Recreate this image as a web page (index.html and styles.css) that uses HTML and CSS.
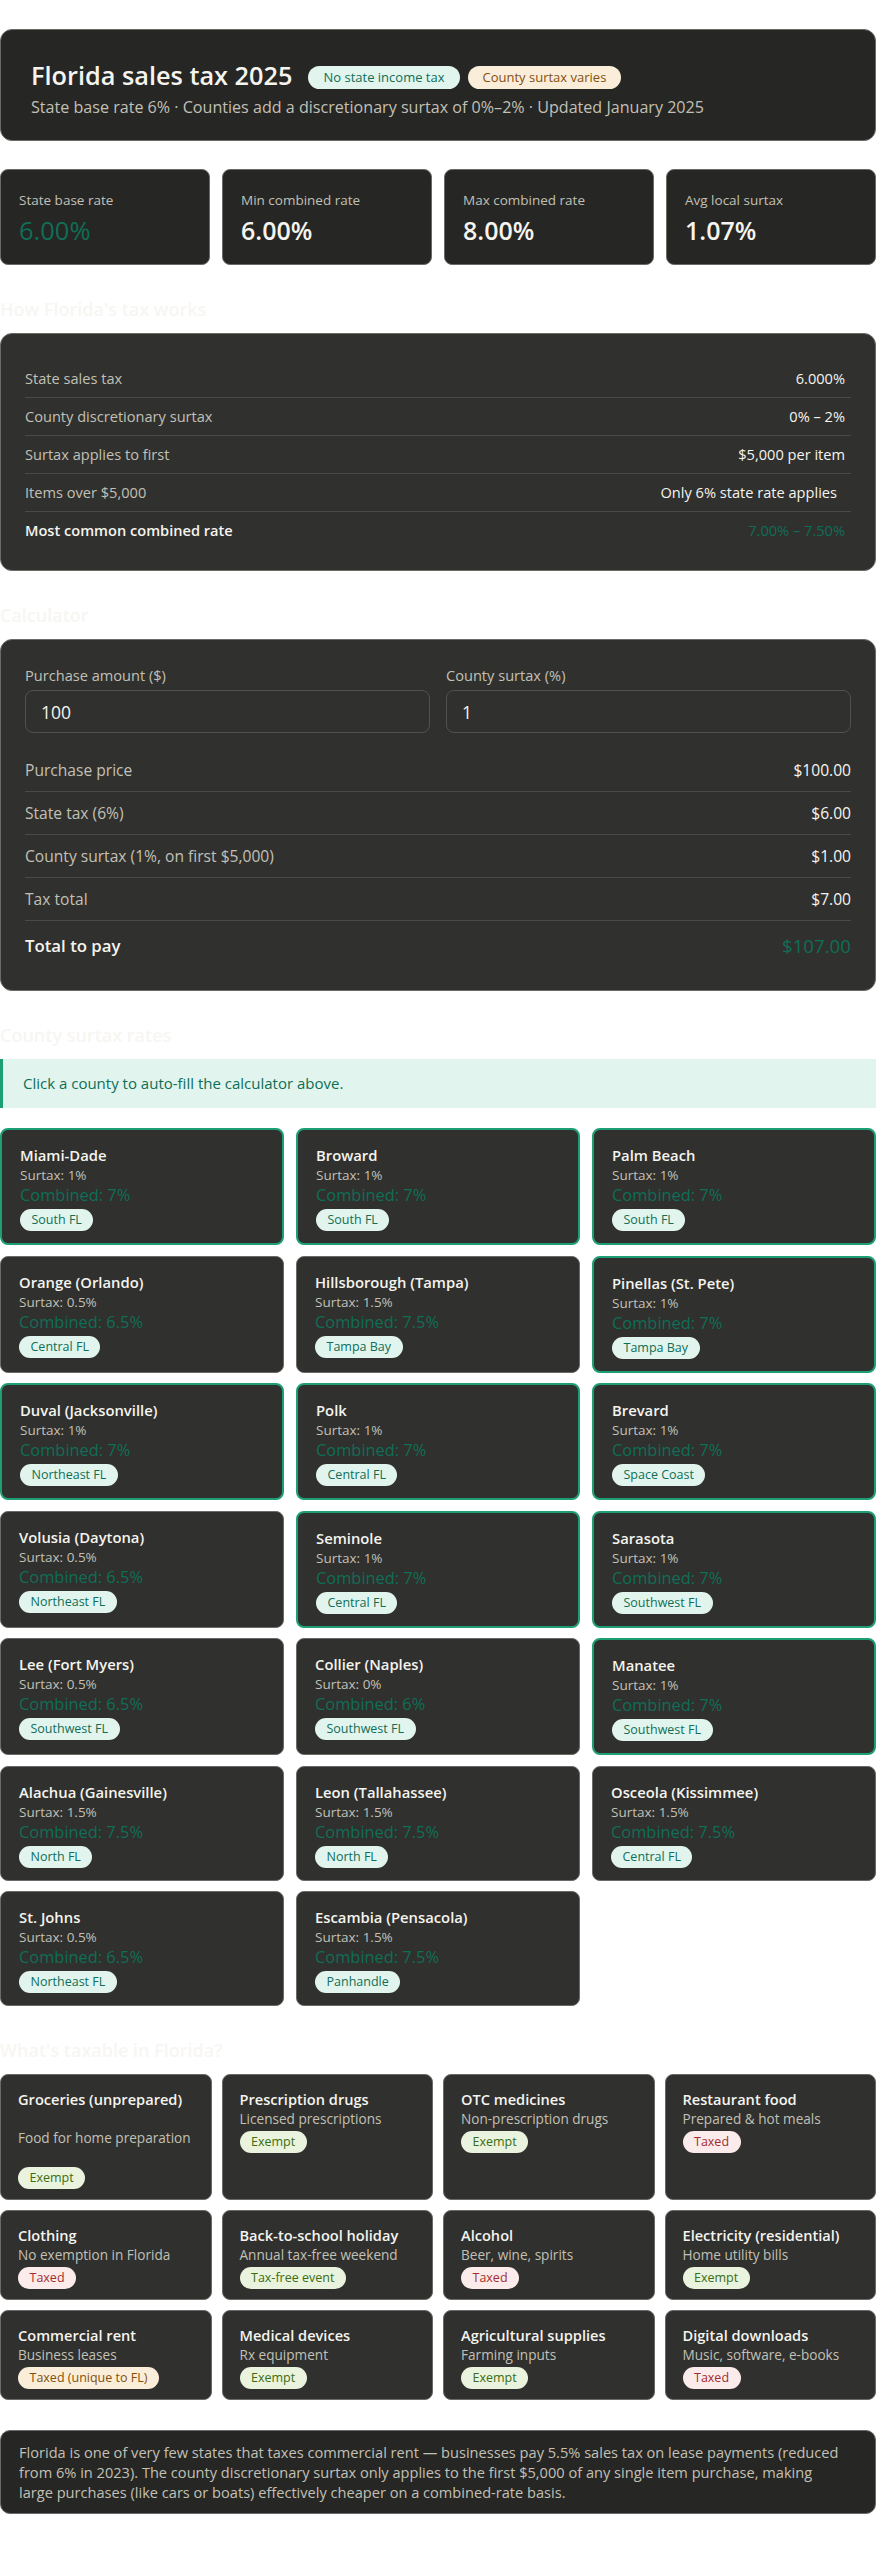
FILE: index.html
```html
<!DOCTYPE html>
<html lang="en">
<head>
<meta charset="utf-8">
<title>Florida sales tax 2025</title>
<link rel="stylesheet" href="styles.css">
</head>
<body>
<div class="page">
  <header class="hero">
    <div class="hero-title-row">
      <h1 class="hero-title">Florida sales tax 2025</h1>
      <span class="pill pill-teal">No state income tax</span>
      <span class="pill pill-amber">County surtax varies</span>
    </div>
    <p class="hero-sub">State base rate 6% · Counties add a discretionary surtax of 0%–2% · Updated January 2025</p>
  </header>

  <section class="stats">
    <div class="stat"><div class="stat-label">State base rate</div><div class="stat-value green">6.00%</div></div>
    <div class="stat"><div class="stat-label">Min combined rate</div><div class="stat-value">6.00%</div></div>
    <div class="stat"><div class="stat-label">Max combined rate</div><div class="stat-value">8.00%</div></div>
    <div class="stat"><div class="stat-label">Avg local surtax</div><div class="stat-value">1.07%</div></div>
  </section>

  <h2 class="section-title">How Florida's tax works</h2>
  <section class="panel panel-rules">
    <div class="row"><span class="row-label">State sales tax</span><span class="row-value">6.000%</span></div>
    <div class="row"><span class="row-label">County discretionary surtax</span><span class="row-value">0% – 2%</span></div>
    <div class="row"><span class="row-label">Surtax applies to first</span><span class="row-value">$5,000 per item</span></div>
    <div class="row"><span class="row-label">Items over $5,000</span><span class="row-value row-value-inset">Only 6% state rate applies</span></div>
    <div class="row row-strong"><span class="row-label">Most common combined rate</span><span class="row-value green">7.00% – 7.50%</span></div>
  </section>

  <h2 class="section-title">Calculator</h2>
  <section class="panel panel-calc">
    <div class="fields">
      <label class="field"><span class="field-label">Purchase amount ($)</span><input class="field-input" type="text" value="100"></label>
      <label class="field"><span class="field-label">County surtax (%)</span><input class="field-input" type="text" value="1"></label>
    </div>
    <div class="calc-rows">
      <div class="row"><span class="row-label">Purchase price</span><span class="row-value">$100.00</span></div>
      <div class="row"><span class="row-label">State tax (6%)</span><span class="row-value">$6.00</span></div>
      <div class="row"><span class="row-label">County surtax (1%, on first $5,000)</span><span class="row-value">$1.00</span></div>
      <div class="row"><span class="row-label">Tax total</span><span class="row-value">$7.00</span></div>
      <div class="row row-total"><span class="row-label">Total to pay</span><span class="row-value green">$107.00</span></div>
    </div>
  </section>

  <h2 class="section-title">County surtax rates</h2>
  <div class="info">Click a county to auto-fill the calculator above.</div>
  <section class="counties">
    <div class="county is-active"><div class="county-name">Miami-Dade</div><div class="county-surtax">Surtax: 1%</div><div class="county-combined">Combined: 7%</div><span class="tag tag-teal">South FL</span></div>
    <div class="county is-active"><div class="county-name">Broward</div><div class="county-surtax">Surtax: 1%</div><div class="county-combined">Combined: 7%</div><span class="tag tag-teal">South FL</span></div>
    <div class="county is-active"><div class="county-name">Palm Beach</div><div class="county-surtax">Surtax: 1%</div><div class="county-combined">Combined: 7%</div><span class="tag tag-teal">South FL</span></div>
    <div class="county"><div class="county-name">Orange (Orlando)</div><div class="county-surtax">Surtax: 0.5%</div><div class="county-combined">Combined: 6.5%</div><span class="tag tag-teal">Central FL</span></div>
    <div class="county"><div class="county-name">Hillsborough (Tampa)</div><div class="county-surtax">Surtax: 1.5%</div><div class="county-combined">Combined: 7.5%</div><span class="tag tag-teal">Tampa Bay</span></div>
    <div class="county is-active"><div class="county-name">Pinellas (St. Pete)</div><div class="county-surtax">Surtax: 1%</div><div class="county-combined">Combined: 7%</div><span class="tag tag-teal">Tampa Bay</span></div>
    <div class="county is-active"><div class="county-name">Duval (Jacksonville)</div><div class="county-surtax">Surtax: 1%</div><div class="county-combined">Combined: 7%</div><span class="tag tag-teal">Northeast FL</span></div>
    <div class="county is-active"><div class="county-name">Polk</div><div class="county-surtax">Surtax: 1%</div><div class="county-combined">Combined: 7%</div><span class="tag tag-teal">Central FL</span></div>
    <div class="county is-active"><div class="county-name">Brevard</div><div class="county-surtax">Surtax: 1%</div><div class="county-combined">Combined: 7%</div><span class="tag tag-teal">Space Coast</span></div>
    <div class="county"><div class="county-name">Volusia (Daytona)</div><div class="county-surtax">Surtax: 0.5%</div><div class="county-combined">Combined: 6.5%</div><span class="tag tag-teal">Northeast FL</span></div>
    <div class="county is-active"><div class="county-name">Seminole</div><div class="county-surtax">Surtax: 1%</div><div class="county-combined">Combined: 7%</div><span class="tag tag-teal">Central FL</span></div>
    <div class="county is-active"><div class="county-name">Sarasota</div><div class="county-surtax">Surtax: 1%</div><div class="county-combined">Combined: 7%</div><span class="tag tag-teal">Southwest FL</span></div>
    <div class="county"><div class="county-name">Lee (Fort Myers)</div><div class="county-surtax">Surtax: 0.5%</div><div class="county-combined">Combined: 6.5%</div><span class="tag tag-teal">Southwest FL</span></div>
    <div class="county"><div class="county-name">Collier (Naples)</div><div class="county-surtax">Surtax: 0%</div><div class="county-combined">Combined: 6%</div><span class="tag tag-teal">Southwest FL</span></div>
    <div class="county is-active"><div class="county-name">Manatee</div><div class="county-surtax">Surtax: 1%</div><div class="county-combined">Combined: 7%</div><span class="tag tag-teal">Southwest FL</span></div>
    <div class="county"><div class="county-name">Alachua (Gainesville)</div><div class="county-surtax">Surtax: 1.5%</div><div class="county-combined">Combined: 7.5%</div><span class="tag tag-teal">North FL</span></div>
    <div class="county"><div class="county-name">Leon (Tallahassee)</div><div class="county-surtax">Surtax: 1.5%</div><div class="county-combined">Combined: 7.5%</div><span class="tag tag-teal">North FL</span></div>
    <div class="county"><div class="county-name">Osceola (Kissimmee)</div><div class="county-surtax">Surtax: 1.5%</div><div class="county-combined">Combined: 7.5%</div><span class="tag tag-teal">Central FL</span></div>
    <div class="county"><div class="county-name">St. Johns</div><div class="county-surtax">Surtax: 0.5%</div><div class="county-combined">Combined: 6.5%</div><span class="tag tag-teal">Northeast FL</span></div>
    <div class="county"><div class="county-name">Escambia (Pensacola)</div><div class="county-surtax">Surtax: 1.5%</div><div class="county-combined">Combined: 7.5%</div><span class="tag tag-teal">Panhandle</span></div>
  </section>

  <h2 class="section-title">What's taxable in Florida?</h2>
  <section class="items">
    <div class="item item-spread"><div class="item-name">Groceries (unprepared)</div><div class="item-desc">Food for home preparation</div><span class="tag tag-green">Exempt</span></div>
    <div class="item"><div class="item-name">Prescription drugs</div><div class="item-desc">Licensed prescriptions</div><span class="tag tag-green">Exempt</span></div>
    <div class="item"><div class="item-name">OTC medicines</div><div class="item-desc">Non-prescription drugs</div><span class="tag tag-green">Exempt</span></div>
    <div class="item"><div class="item-name">Restaurant food</div><div class="item-desc">Prepared &amp; hot meals</div><span class="tag tag-red">Taxed</span></div>
    <div class="item"><div class="item-name">Clothing</div><div class="item-desc">No exemption in Florida</div><span class="tag tag-red">Taxed</span></div>
    <div class="item"><div class="item-name">Back-to-school holiday</div><div class="item-desc">Annual tax-free weekend</div><span class="tag tag-green">Tax-free event</span></div>
    <div class="item"><div class="item-name">Alcohol</div><div class="item-desc">Beer, wine, spirits</div><span class="tag tag-red">Taxed</span></div>
    <div class="item"><div class="item-name">Electricity (residential)</div><div class="item-desc">Home utility bills</div><span class="tag tag-green">Exempt</span></div>
    <div class="item"><div class="item-name">Commercial rent</div><div class="item-desc">Business leases</div><span class="tag tag-amber">Taxed (unique to FL)</span></div>
    <div class="item"><div class="item-name">Medical devices</div><div class="item-desc">Rx equipment</div><span class="tag tag-green">Exempt</span></div>
    <div class="item"><div class="item-name">Agricultural supplies</div><div class="item-desc">Farming inputs</div><span class="tag tag-green">Exempt</span></div>
    <div class="item"><div class="item-name">Digital downloads</div><div class="item-desc">Music, software, e-books</div><span class="tag tag-red">Taxed</span></div>
  </section>

  <p class="note">Florida is one of very few states that taxes commercial rent — businesses pay 5.5% sales tax on lease payments (reduced from 6% in 2023). The county discretionary surtax only applies to the first $5,000 of any single item purchase, making large purchases (like cars or boats) effectively cheaper on a combined-rate basis.</p>
</div>
</body>
</html>
```

FILE: styles.css
```css
* { box-sizing: border-box; }

body {
  margin: 0;
  background: #ffffff;
  font-family: "Open Sans", "Noto Sans", sans-serif;
  color: #f5f4ef;
}

.page {
  padding: 29px 0 40px;
}

.green { color: #0f6e56; }

/* hero */
.hero {
  background: #262624;
  border: 1px solid #6b6a66;
  border-radius: 12px;
  padding: 30px 30px 22px;
}
.hero-title-row {
  display: flex;
  align-items: center;
  gap: 8px;
  height: 30px;
}
.hero-title {
  margin: 0 8px 0 0;
  font-size: 25.3px;
  line-height: 30px;
  font-weight: 600;
  color: #f5f4ef;
}
.hero-sub {
  margin: 6px 0 0;
  font-size: 16.1px;
  line-height: 22px;
  color: #c2c0b6;
}
.pill {
  display: inline-block;
  margin-top: 4px;
  font-size: 13px;
  line-height: 23px;
  padding: 0 15px;
  border-radius: 999px;
}
.pill-teal { background: #e1f5ee; color: #0f6e56; }
.pill-amber { background: #faeeda; color: #854f0b; }

/* stats */
.stats {
  display: grid;
  grid-template-columns: repeat(4, 1fr);
  gap: 12px;
  margin-top: 28px;
}
.stat {
  background: #262624;
  border: 1px solid #6b6a66;
  border-radius: 8px;
  padding: 20px 18px 18px;
}
.stat-label {
  font-size: 13.5px;
  line-height: 20px;
  color: #c2c0b6;
}
.stat-value {
  margin-top: 4px;
  font-size: 25px;
  line-height: 32px;
  font-weight: 600;
}
.stat-value.green { color: #0f6e56; font-weight: 400; font-size: 25.5px; }

/* section titles */
.section-title {
  margin: 32px 0 12px;
  font-size: 18px;
  line-height: 24px;
  font-weight: 600;
  color: #f7f6f2;
}

/* panels */
.panel {
  background: #30302e;
  border: 1px solid #6b6a66;
  border-radius: 12px;
}
.panel-rules {
  padding: 26px 24px 21px;
}
.row {
  display: flex;
  justify-content: space-between;
  align-items: center;
  border-bottom: 1px solid #4a4a47;
  font-size: 14.6px;
  line-height: 20px;
}
.panel-rules .row { padding: 8px 0 9px; }
.panel-rules .row-value { margin-right: 6px; }
.row:last-child { border-bottom: none; }
.row-label { color: #c2c0b6; }
.row-value { color: #f5f4ef; }
.row-value.green { color: #0f6e56; }
.panel-rules .row-value-inset { margin-right: 14px; }
.row-strong .row-label { font-weight: 600; color: #f5f4ef; }

.panel-calc {
  padding: 25px 24px 21px;
}
.fields {
  display: grid;
  grid-template-columns: 1fr 1fr;
  gap: 16px;
}
.field {
  display: flex;
  flex-direction: column;
  gap: 5px;
}
.field-label {
  font-size: 14.6px;
  line-height: 20px;
  color: #c2c0b6;
}
.field-input {
  width: 100%;
  height: 43px;
  background: #30302e;
  border: 1px solid #52514d;
  border-radius: 8px;
  padding: 0 15px;
  font-family: inherit;
  font-size: 17.5px;
  color: #f5f4ef;
  outline: none;
}
.calc-rows {
  margin-top: 16px;
}
.calc-rows .row {
  padding: 11px 0 11px;
  font-size: 15.6px;
}
.calc-rows .row-total { padding-top: 13px; }
.row-total .row-label {
  font-size: 16.8px;
  line-height: 24px;
  font-weight: 600;
  color: #f5f4ef;
}
.row-total .row-value {
  font-size: 18.7px;
  line-height: 24px;
}

/* info */
.info {
  background: #e1f5ee;
  border-left: 3px solid #1d9e75;
  color: #0f6e56;
  font-size: 15px;
  line-height: 20px;
  padding: 14px 20px 15px;
  margin-bottom: 20px;
}

/* counties */
.counties {
  display: grid;
  grid-template-columns: repeat(3, 1fr);
  gap: 10.5px 12px;
}
.county {
  background: #30302e;
  border: 1px solid #6b6a66;
  border-radius: 8px;
  padding: 15px 18px 12px;
}
.county.is-active {
  border: 2px solid #1d9e75;
}
.county-name {
  font-size: 14.8px;
  line-height: 20px;
  font-weight: 600;
  color: #f5f4ef;
}
.county-surtax {
  font-size: 13.5px;
  line-height: 20px;
  color: #c2c0b6;
}
.county-combined {
  font-size: 16.4px;
  line-height: 20px;
  color: #0f6e56;
}
.tag {
  display: inline-block;
  margin-top: 4px;
  padding: 0 11.5px;
  border-radius: 999px;
  font-size: 12.5px;
  line-height: 22px;
}
.tag-teal { background: #e1f5ee; color: #0f6e56; }
.tag-green { background: #eaf3de; color: #3b6d11; }
.tag-red { background: #fcebeb; color: #a32d2d; }
.tag-amber { background: #faeeda; color: #854f0b; }

/* items */
.items {
  display: grid;
  grid-template-columns: repeat(4, 1fr);
  gap: 10px;
}
.item {
  background: #30302e;
  border: 1px solid #6b6a66;
  border-radius: 8px;
  padding: 14px 17px 10px;
}
.item .tag { margin-top: 2px; }
.item-spread {
  min-height: 126px;
  display: flex;
  flex-direction: column;
  justify-content: space-between;
  align-items: flex-start;
}
.item-spread .tag { margin-top: 0; }
.item-name {
  font-size: 14.6px;
  line-height: 20px;
  font-weight: 600;
  color: #f5f4ef;
}
.item-desc {
  font-size: 13.6px;
  line-height: 20px;
  color: #c2c0b6;
}

/* note */
.note {
  margin: 30px 0 0;
  background: #262624;
  border: 1px solid #6b6a66;
  border-radius: 10px;
  padding: 11px 29px 11px 18px;
  font-size: 14.6px;
  line-height: 20px;
  color: #c2c0b6;
}
```
